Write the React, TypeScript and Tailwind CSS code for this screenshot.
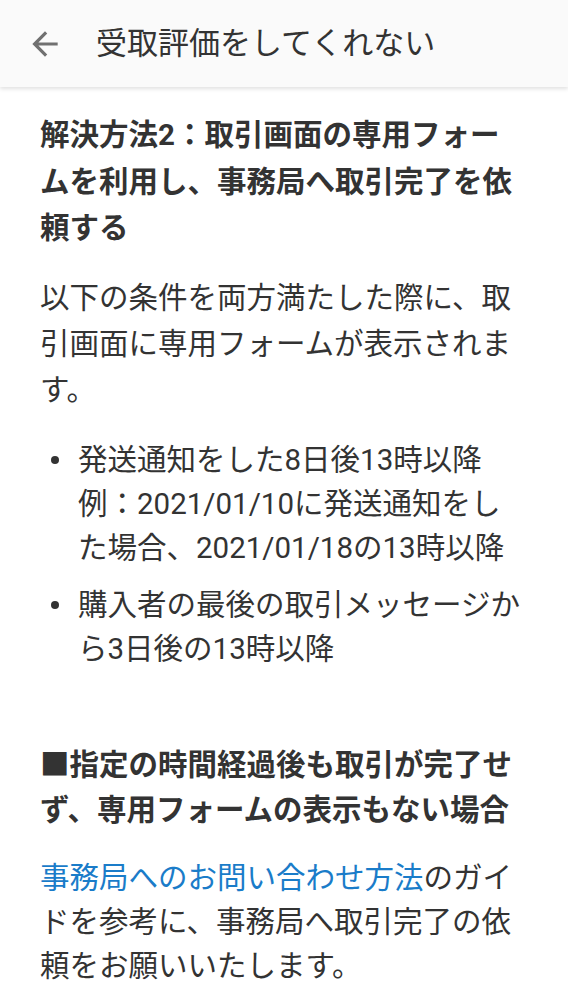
export default function App() {
  const font = { fontFamily: 'Roboto, "Noto Sans CJK JP", "Noto Sans", sans-serif' };
  return (
    <div className="min-h-[999px] bg-white text-[#333333]" style={font}>
      <header className="flex h-[87px] items-center bg-[#fafafa] shadow-[0_2px_4px_rgba(0,0,0,0.12)]">
        <div className="flex w-[96px] shrink-0 items-center pl-[26px]">
          <svg width="38" height="38" viewBox="0 0 24 24" fill="#707070">
            <path d="M20 11H7.83l5.59-5.59L12 4l-8 8 8 8 1.41-1.41L7.83 13H20v-2z" />
          </svg>
        </div>
        <h1 className="text-[31px] leading-none text-[#333333]">受取評価をしてくれない</h1>
      </header>

      <main className="px-[40px] pt-[25px] pb-[20px]">
        <h2 className="text-[29.5px] font-bold leading-[46.5px]">
          解決方法2：取引画面の専用フォームを利用し、事務局へ取引完了を依頼する
        </h2>
        <p className="mt-[23px] text-[29.5px] leading-[46px]">
          以下の条件を両方満たした際に、取引画面に専用フォームが表示されます。
        </p>
        <ul className="mt-[25px] flex flex-col gap-[13px] text-[29.5px] leading-[44px]">
          <li className="flex">
            <div className="flex h-[44px] w-[38px] shrink-0 items-center pl-[11px]">
              <span className="h-[8px] w-[8px] rounded-full bg-[#333333]" />
            </div>
            <div>
              発送通知をした8日後13時以降
              <br />
              例：2021/01/10に発送通知をした場合、2021/01/18の13時以降
            </div>
          </li>
          <li className="flex">
            <div className="flex h-[44px] w-[38px] shrink-0 items-center pl-[11px]">
              <span className="h-[8px] w-[8px] rounded-full bg-[#333333]" />
            </div>
            <div>購入者の最後の取引メッセージから3日後の13時以降</div>
          </li>
        </ul>
        <h2 className="mt-[72px] text-[29.5px] font-bold leading-[45px]">
          ■指定の時間経過後も取引が完了せず、専用フォームの表示もない場合
        </h2>
        <p className="mt-[23px] text-[29.5px] leading-[44px]">
          <a className="text-[#1a7cc9]">事務局へのお問い合わせ方法</a>
          のガイドを参考に、事務局へ取引完了の依頼をお願いいたします。
        </p>
      </main>
    </div>
  );
}
